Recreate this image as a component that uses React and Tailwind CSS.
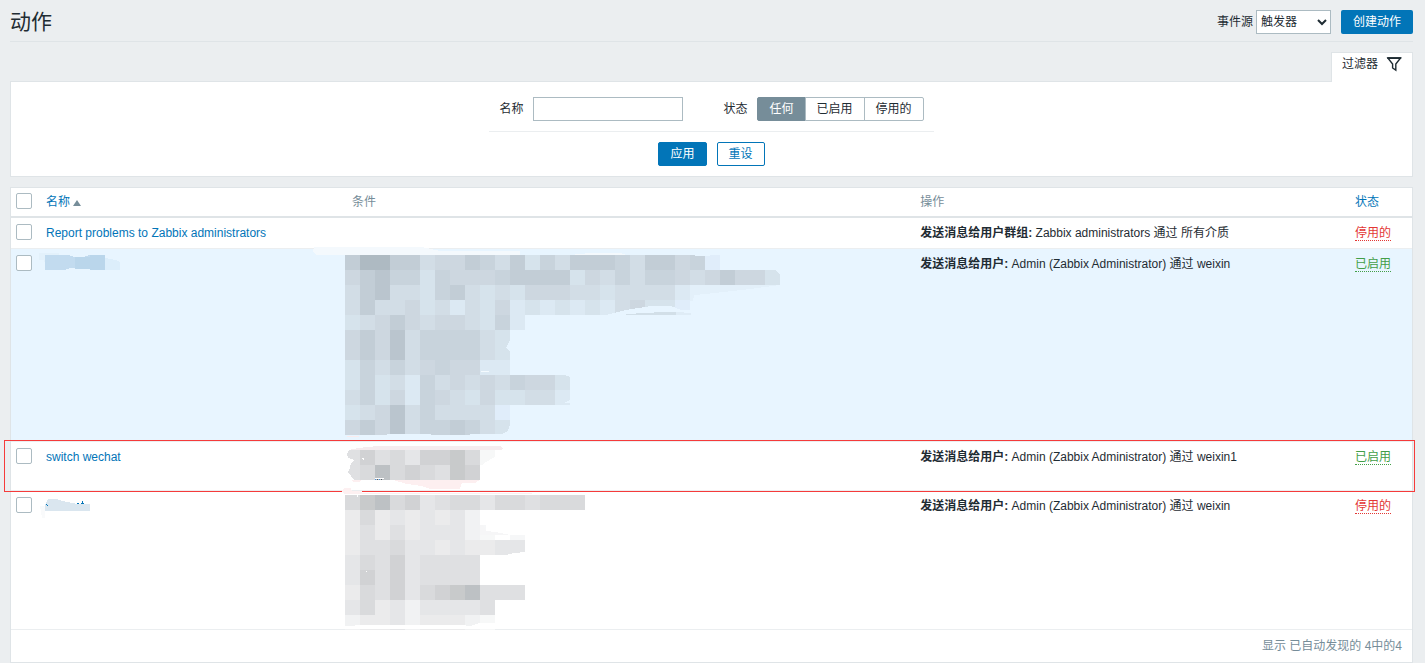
import { useState } from "react";

const CELL = 15;

const BLUE_SHADES = {
  a: "#aebac2",
  b: "#bac5ce",
  c: "#c2cdd6",
  d: "#c8d3dc",
  e: "#cdd7e0",
  f: "#d2dde6",
  g: "#d6e3ec",
  h: "#dce9f3",
  i: "#e0edfa",
};

const GREY_SHADES = {
  a: "#bdc1c4",
  b: "#c8cacb",
  c: "#d1d2d4",
  d: "#d9dadc",
  e: "#dfe0e2",
  f: "#e5e6e8",
  g: "#ebebec",
  h: "#f1f2f3",
  i: "#f7f8f8",
};

const CONDITIONS_A = [
  "caaccfeecdfcgdfcccdfccedi",
  "ecbddgdeeedccccgefdfddefeceeg",
  "fcbffgdcfgfgeeeffgffffhi",
  "fcffegfhfgehghghghfeggi",
  "gfecefeefgdh",
  "ecebfddddfg",
  "ecebfddddfg",
  "gdfdfedeehh",
  "gdgfhdfefefdeeg",
  "fdgehdefgeggffh",
  "gfebfdffffi",
  "ecebfddcdfg",
];

const CONDITIONS_B = ["ecedfccbdi", "edadcdebc"];

const CONDITIONS_C = [
  "dbadcfeddfddeddd",
  "gdgfgfgfh",
  "gegegfffhi",
  "geedffgfggff",
  "fdecfeeee",
  "fcecfeeee",
  "gdecfdcbaeee",
  "fdgfhffffe",
  "hggfhggghi",
];

function Mosaic({ rows, shades, y }) {
  return rows.map((row, r) =>
    row.split("").map((shade, c) => (
      <rect
        key={`${r}-${c}`}
        x={c * CELL}
        y={y + r * CELL}
        width={CELL}
        height={CELL}
        fill={shades[shade]}
      />
    ))
  );
}

function HiddenNameA() {
  return (
    <svg width="80" height="18" className="block overflow-visible" shapeRendering="crispEdges" aria-hidden="true">
      <path d="M-2 -2h20v3H6v6H3v-2H-2z" fill="#e3f1fb" />
      <path d="M4 0h24l5 2h10l5-2h16v15H51l-9-2H30l-7 2H4z" fill="#c2dbef" />
      <path d="M34 2h15v12H34zM49 0h15v15H49z" fill="#bad6eb" />
      <path d="M64 3l11 2l4 2v8H64z" fill="#dceefb" />
    </svg>
  );
}

function HiddenNameC() {
  return (
    <svg width="80" height="18" className="block overflow-visible" shapeRendering="crispEdges" aria-hidden="true">
      <path d="M-1 9h5v12H1z" fill="#f9fafb" />
      <path d="M4 8l3-6h8l7 2l9 2l5 1h13v7H4z" fill="#dae6ef" />
      <path d="M5 7h1v1H5zM6 8h1v1H6zM36 6h2v1H36zM40 6h3v1H40zM41 4h1v3H41z" fill="#0275b8" />
    </svg>
  );
}

function HiddenConditionsA() {
  return (
    <svg width="440" height="192" className="block overflow-visible" shapeRendering="crispEdges" aria-hidden="true">
      <path d="M-31 -2H77l18 4h80v4H-29l-3-3z" fill="#f4f9fd" />
      <path d="M225 6l20-2h30l6 2z" fill="#f4f9fd" />
      <Mosaic rows={CONDITIONS_A} shades={BLUE_SHADES} y={6} />
      {/* brush strokes eating into the blocks */}
      <path d="M261 66l20-5l25-4h20l10 4h20v6z" fill="#e8f5ff" />
      <path d="M281 65l20-1l15-1h15v3h-50z" fill="#d2dfe8" />
      <path d="M331 63l15 1v2h-15z" fill="#dfecf6" />
      <path d="M345 36h90l-30 4l-54 6l-2 6h-4z" fill="#e3f0fa" />
      <path d="M349 46l11-1v7h-12z" fill="#e8f5ff" />
      <path d="M350 6l15-1v2h-15zM430 21h6v5h-1l-3-4z" fill="#e8f5ff" />
      <path d="M165 81v10l-4 8l4 4zM165 175v12h-40v-2h32l6-3z" fill="#e8f5ff" />
      <path d="M225 125v3l-5-2zM225 151v3h-6z" fill="#e8f5ff" />
      <path d="M136 122h8v1h-8z" fill="#f4fafe" />
      <path d="M2 187h12v1H2z" fill="#fbecee" />
      <path d="M42 185h44v1H42z" fill="#e8f5ff" />
    </svg>
  );
}

function HiddenConditionsB() {
  return (
    <svg width="440" height="48" className="block overflow-visible" shapeRendering="crispEdges" aria-hidden="true">
      <path d="M3 8l10-2l20-2h122l3 3l-2 1z" fill="#f5ebee" />
      <Mosaic rows={CONDITIONS_B} shades={GREY_SHADES} y={8} />
      <path d="M0 8h4l-2 4l1 4l6 2l-3 3l-1 5l-2 4l3 4l3 4H0z" fill="#fff" />
      <path d="M150 15v8h-13l4-3z" fill="#fff" />
      <path d="M17 16h2v2h-1z" fill="#fff" />
      <path d="M6 38h10l-2 2H9zM48 38h87l-5 3h-13l-2 6H85l-8-3l-15-2z" fill="#fdeff0" />
      <path d="M30 36h9v1h-9z" fill="#fff" />
      <path d="M30 37h1v1h-1zM34 37h1v1h-1z" fill="#4a90d9" />
      <path d="M32 37h1v1h-1zM36 37h1v1h-1z" fill="#505a60" />
    </svg>
  );
}

function HiddenConditionsC() {
  return (
    <svg width="440" height="138" className="relative z-10 block overflow-visible" shapeRendering="crispEdges" aria-hidden="true">
      <Mosaic rows={CONDITIONS_C} shades={GREY_SHADES} y={4} />
      <path d="M-3 -1l2-2h7l1 3h10v2h170v1H-1l-2-2z" fill="#fdf0f1" />
      <path d="M12 3h1v3h-1zM32 3h1v1h-1zM21 80h1v1h-1z" fill="#fff" />
      <path d="M138 34l3 6l10 1l14 3h-30V34z" fill="#f6f6f7" />
      <path d="M138 34h12v6h-9zM165 44h15v5h-15z" fill="#f6f7f8" />
      <path d="M141 34h10v7l-10-1z" fill="#fff" />
      <path d="M180 61l-10 1l-15 3h25z" fill="#fff" />
      <path d="M0 135h8l4-1h104l9 1l10-3h15v6H0z" fill="#fff" />
    </svg>
  );
}

const ACTIONS = [
  {
    id: 3,
    name: "Report problems to Zabbix administrators",
    label: "发送消息给用户群组:",
    operation: "Zabbix administrators 通过 所有介质",
    enabled: false,
  },
  {
    id: 7,
    hiddenName: HiddenNameA,
    Conditions: HiddenConditionsA,
    label: "发送消息给用户:",
    operation: "Admin (Zabbix Administrator) 通过 weixin",
    enabled: true,
    hovered: true,
  },
  {
    id: 8,
    name: "switch wechat",
    Conditions: HiddenConditionsB,
    label: "发送消息给用户:",
    operation: "Admin (Zabbix Administrator) 通过 weixin1",
    enabled: true,
    marked: true,
  },
  {
    id: 9,
    hiddenName: HiddenNameC,
    Conditions: HiddenConditionsC,
    label: "发送消息给用户:",
    operation: "Admin (Zabbix Administrator) 通过 weixin",
    enabled: false,
  },
];

const STATUSES = ["任何", "已启用", "停用的"];

function Checkbox({ label }) {
  return (
    <input
      type="checkbox"
      aria-label={label}
      className="block h-4 w-4 appearance-none rounded-[2px] border border-[#acbbc2] bg-white checked:bg-[#0275b8]"
    />
  );
}

function FilterIcon() {
  return (
    <svg width="16" height="16" viewBox="0 0 16 16" fill="none" stroke="#1f2c33" strokeWidth="1.4" aria-hidden="true">
      <path d="M2 2.2h12.4L9.8 8v6.2L6.6 12V8z" />
      <path d="M1.2 2h14" strokeWidth="1.8" />
    </svg>
  );
}

function Filter() {
  const [status, setStatus] = useState("任何");

  return (
    <section>
      <div className="flex justify-end">
        <a
          href="#filter"
          className="relative -mb-px flex h-[30px] items-start gap-2 border border-b-0 border-[#dfe4e7] bg-white px-[10px] pt-[2px]"
        >
          <span>过滤器</span>
          <span className="pt-px">
            <FilterIcon />
          </span>
        </a>
      </div>
      <form
        id="filter"
        onSubmit={(e) => e.preventDefault()}
        className="flex flex-col items-center border border-[#dfe4e7] bg-white pt-[15px] pb-[10px]"
      >
        <div className="flex items-center gap-10 border-b border-[#ebeef0] px-[10px] pb-[10px]">
          <div className="flex items-center gap-[10px]">
            <label htmlFor="filter-name">名称</label>
            <input id="filter-name" type="text" className="h-6 w-[150px] border border-[#acbbc2] bg-white px-1" />
          </div>
          <fieldset className="flex items-center gap-[10px]">
            <legend className="float-left leading-6">状态</legend>
            <div className="flex">
              {STATUSES.map((s) => (
                <label
                  key={s}
                  className="h-6 border border-[#acbbc2] px-[11px] leading-[22px] not-first:-ml-px first:rounded-l-[2px] last:rounded-r-[2px] has-checked:border-[#768d99] has-checked:bg-[#768d99] has-checked:text-white"
                >
                  <input
                    type="radio"
                    name="status"
                    className="sr-only"
                    checked={status === s}
                    onChange={() => setStatus(s)}
                  />
                  {s}
                </label>
              ))}
            </div>
          </fieldset>
        </div>
        <div className="flex gap-[10px] pt-[10px]">
          <button type="submit" className="h-6 rounded-[2px] border border-[#0275b8] bg-[#0275b8] px-[11px] text-white">
            应用
          </button>
          <button type="reset" className="h-6 rounded-[2px] border border-[#0275b8] bg-white px-[11px] text-[#0275b8]">
            重设
          </button>
        </div>
      </form>
    </section>
  );
}

function ActionRow({ action }) {
  const { name, hiddenName: HiddenName, Conditions, label, operation, enabled, hovered, marked } = action;

  return (
    <tr className={`relative align-top ${hovered ? "bg-[#e8f5ff]" : "bg-white"}`}>
      <td className="py-[6px] pl-[5px]">
        <Checkbox label={name || `action ${action.id}`} />
      </td>
      <td className="px-[5px] py-[6px]">
        {name ? (
          <a href="#action" className="text-[#0275b8]">
            {name}
          </a>
        ) : (
          <div className="-ml-[5px]">
            <HiddenName />
          </div>
        )}
      </td>
      <td>{Conditions && <Conditions />}</td>
      <td className="px-[5px] py-[6px]">
        <b>{label}</b> {operation}
      </td>
      <td className="px-[5px] py-[6px]">
        <a
          href="#status"
          className={`block h-[17px] w-fit border-b border-dotted leading-[18px] ${
            enabled ? "border-[#429e47] text-[#429e47]" : "border-[#e33734] text-[#e33734]"
          }`}
        >
          {enabled ? "已启用" : "停用的"}
        </a>
        {marked && (
          <div className="pointer-events-none absolute -top-[2px] -right-[3px] -bottom-px -left-[7px] z-10 border border-[#f53b3b]" />
        )}
      </td>
    </tr>
  );
}

export default function App() {
  return (
    <div className="min-h-screen bg-[#ebeef0] pr-3 pl-[10px] font-['Liberation_Sans','Noto_Sans_CJK_SC',sans-serif] text-[12px] leading-[18px] text-[#1f2c33]">
      <header className="flex items-start justify-between border-b border-[#dfe4e7] pt-[10px] pb-[7px]">
        <h1 className="text-[21px] leading-6">动作</h1>
        <div className="flex items-center gap-[10px]">
          <div className="flex items-center gap-[3px]">
            <label htmlFor="eventsource">事件源</label>
            <select id="eventsource" className="h-6 w-[75px] border border-[#acbbc2] bg-white">
              <option>触发器</option>
              <option>自动发现</option>
              <option>自动注册</option>
              <option>内部</option>
            </select>
          </div>
          <button type="button" className="h-6 rounded-[2px] bg-[#0275b8] px-3 text-white">
            创建动作
          </button>
        </div>
      </header>

      <main className="pt-[10px]">
        <Filter />

        <div className="mt-[10px] border border-[#dfe4e7] bg-white">
          <table className="w-full table-fixed border-separate border-spacing-0 [&_tbody_td]:border-b [&_tbody_td]:border-[#ebeef0]">
            <colgroup>
              <col className="w-[30px]" />
              <col className="w-[21.7%]" />
              <col className="w-[40.7%]" />
              <col />
              <col className="w-[62px]" />
            </colgroup>
            <thead className="text-left text-[#768d99] [&_th]:border-b-2 [&_th]:border-[#dfe4e7] [&_th]:py-[5px] [&_th]:font-normal">
              <tr className="align-top">
                <th className="pl-[5px]">
                  <Checkbox label="全选" />
                </th>
                <th className="px-[5px]">
                  <a href="#sort-name" className="flex items-center gap-[3px] text-[#0275b8]">
                    名称
                    <svg width="8" height="6" viewBox="0 0 8 6" className="mt-[2px]" aria-hidden="true">
                      <path d="M4 0l4 6H0z" fill="#768d99" />
                    </svg>
                  </a>
                </th>
                <th className="pl-[7px]">条件</th>
                <th className="px-[5px]">操作</th>
                <th className="px-[5px]">
                  <a href="#sort-status" className="text-[#0275b8]">
                    状态
                  </a>
                </th>
              </tr>
            </thead>
            <tbody>
              {ACTIONS.map((action) => (
                <ActionRow key={action.id} action={action} />
              ))}
            </tbody>
          </table>
          <div className="px-[10px] py-[7px] text-right text-[#768d99]">显示 已自动发现的 4中的4</div>
        </div>
      </main>
    </div>
  );
}
